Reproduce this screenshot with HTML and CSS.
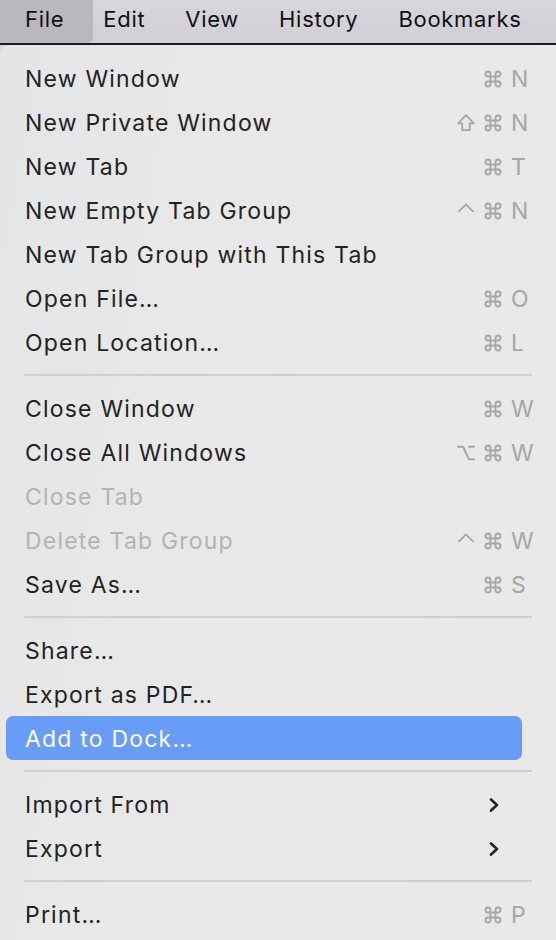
FILE: index.html
```html
<!DOCTYPE html>
<html>
<head>
<meta charset="utf-8">
<link rel="stylesheet" href="styles.css">
</head>
<body>
<div class="menubar">
  <div class="mb-item active">File</div>
  <div class="mb-item">Edit</div>
  <div class="mb-item">View</div>
  <div class="mb-item">History</div>
  <div class="mb-item">Bookmarks</div>
</div>
<div class="menu">
  <div class="item"><span class="label">New Window</span><span class="mods"><svg class="g" viewBox="0 0 24 24"><path d="M15 6v12a3 3 0 1 0 3-3H6a3 3 0 1 0 3 3V6a3 3 0 1 0-3 3h12a3 3 0 1 0-3-3"/></svg></span><span class="key">N</span></div>
  <div class="item"><span class="label">New Private Window</span><span class="mods"><svg class="g" viewBox="0 0 24 24"><path d="M12 2.5L2.5 12.5H7.5V20.5h9V12.5h5Z"/></svg><svg class="g" viewBox="0 0 24 24"><path d="M15 6v12a3 3 0 1 0 3-3H6a3 3 0 1 0 3 3V6a3 3 0 1 0-3 3h12a3 3 0 1 0-3-3"/></svg></span><span class="key">N</span></div>
  <div class="item"><span class="label">New Tab</span><span class="mods"><svg class="g" viewBox="0 0 24 24"><path d="M15 6v12a3 3 0 1 0 3-3H6a3 3 0 1 0 3 3V6a3 3 0 1 0-3 3h12a3 3 0 1 0-3-3"/></svg></span><span class="key">T</span></div>
  <div class="item"><span class="label">New Empty Tab Group</span><span class="mods"><svg class="g" viewBox="0 0 24 24"><path d="M3 13L12 4 21 13"/></svg><svg class="g" viewBox="0 0 24 24"><path d="M15 6v12a3 3 0 1 0 3-3H6a3 3 0 1 0 3 3V6a3 3 0 1 0-3 3h12a3 3 0 1 0-3-3"/></svg></span><span class="key">N</span></div>
  <div class="item"><span class="label">New Tab Group with This Tab</span></div>
  <div class="item"><span class="label">Open File…</span><span class="mods"><svg class="g" viewBox="0 0 24 24"><path d="M15 6v12a3 3 0 1 0 3-3H6a3 3 0 1 0 3 3V6a3 3 0 1 0-3 3h12a3 3 0 1 0-3-3"/></svg></span><span class="key">O</span></div>
  <div class="item"><span class="label">Open Location…</span><span class="mods"><svg class="g" viewBox="0 0 24 24"><path d="M15 6v12a3 3 0 1 0 3-3H6a3 3 0 1 0 3 3V6a3 3 0 1 0-3 3h12a3 3 0 1 0-3-3"/></svg></span><span class="key">L</span></div>
  <div class="sep"></div>
  <div class="item"><span class="label">Close Window</span><span class="mods"><svg class="g" viewBox="0 0 24 24"><path d="M15 6v12a3 3 0 1 0 3-3H6a3 3 0 1 0 3 3V6a3 3 0 1 0-3 3h12a3 3 0 1 0-3-3"/></svg></span><span class="key">W</span></div>
  <div class="item"><span class="label">Close All Windows</span><span class="mods"><svg class="g" viewBox="0 0 24 24"><path d="M1.5 4.5h7l7 15h7M14.5 4.5h8"/></svg><svg class="g" viewBox="0 0 24 24"><path d="M15 6v12a3 3 0 1 0 3-3H6a3 3 0 1 0 3 3V6a3 3 0 1 0-3 3h12a3 3 0 1 0-3-3"/></svg></span><span class="key">W</span></div>
  <div class="item disabled"><span class="label">Close Tab</span></div>
  <div class="item disabled"><span class="label">Delete Tab Group</span><span class="mods"><svg class="g" viewBox="0 0 24 24"><path d="M3 13L12 4 21 13"/></svg><svg class="g" viewBox="0 0 24 24"><path d="M15 6v12a3 3 0 1 0 3-3H6a3 3 0 1 0 3 3V6a3 3 0 1 0-3 3h12a3 3 0 1 0-3-3"/></svg></span><span class="key">W</span></div>
  <div class="item"><span class="label">Save As…</span><span class="mods"><svg class="g" viewBox="0 0 24 24"><path d="M15 6v12a3 3 0 1 0 3-3H6a3 3 0 1 0 3 3V6a3 3 0 1 0-3 3h12a3 3 0 1 0-3-3"/></svg></span><span class="key">S</span></div>
  <div class="sep"></div>
  <div class="item"><span class="label">Share…</span></div>
  <div class="item"><span class="label">Export as PDF…</span></div>
  <div class="item selected"><span class="label">Add to Dock…</span></div>
  <div class="sep"></div>
  <div class="item"><span class="label">Import From</span><svg class="chev" viewBox="0 0 12 16"><path d="M3 2.5L9 8l-6 5.5"/></svg></div>
  <div class="item"><span class="label">Export</span><svg class="chev" viewBox="0 0 12 16"><path d="M3 2.5L9 8l-6 5.5"/></svg></div>
  <div class="sep"></div>
  <div class="item"><span class="label">Print…</span><span class="mods"><svg class="g" viewBox="0 0 24 24"><path d="M15 6v12a3 3 0 1 0 3-3H6a3 3 0 1 0 3 3V6a3 3 0 1 0-3 3h12a3 3 0 1 0-3-3"/></svg></span><span class="key">P</span></div>
</div>
</body>
</html>
```

FILE: styles.css
```css
html, body {
  margin: 0;
  padding: 0;
}
body {
  width: 556px;
  height: 940px;
  overflow: hidden;
  background: #d3d2d7;
  font-family: Inter, "Liberation Sans", sans-serif;
  -webkit-font-smoothing: antialiased;
}
.menubar {
  display: flex;
  height: 43px;
  background: linear-gradient(#d7d6db, #d0cfd4);
  border-bottom: 2px solid #1c1c1e;
  box-sizing: content-box;
}
.mb-item {
  height: 43px;
  box-sizing: border-box;
  display: flex;
  align-items: center;
  padding: 0 20px 5px 20px;
  font-size: 22px;
  letter-spacing: 0.7px;
  color: #111;
  white-space: nowrap;
}
.mb-item.active {
  background: #b9b8bd;
  border-bottom-right-radius: 6px;
  padding-left: 25px;
  padding-right: 29px;
  margin-right: -10px;
}
.menu {
  background: linear-gradient(100deg, #e4e5e7 0%, #e8e8e8 30%, #e9e9e9 100%);
  border-top-left-radius: 8px;
  padding-top: 11px;
  height: 900px;
  box-sizing: border-box;
}
.item {
  display: flex;
  align-items: center;
  height: 44px;
  box-sizing: border-box;
  padding-top: 2px;
  margin: 0 34px 0 6px;
  padding-left: 19px;
  border-radius: 7px;
  font-size: 23px;
  letter-spacing: 1.2px;
  color: #232323;
  white-space: nowrap;
}
.item.disabled {
  color: #b3b3b3;
}
.item.selected {
  background: #679cf7;
  color: #fff;
}
.label {
  flex: 1;
}
.mods {
  display: flex;
  gap: 7px;
  margin-right: 8px;
  align-items: center;
}
.g {
  width: 20px;
  height: 20px;
  fill: none;
  stroke: #a6a6a6;
  stroke-width: 2.2;
  stroke-linejoin: round;
}
.key {
  width: 11px;
  overflow: visible;
  color: #a6a6a6;
  font-size: 23px;
  letter-spacing: 0;
}
.chev {
  width: 12px;
  height: 16px;
  margin-right: 22px;
  fill: none;
  stroke: #232323;
  stroke-width: 2.6;
  stroke-linecap: round;
  stroke-linejoin: round;
}
.sep {
  height: 2px;
  margin: 10px 24px 10px 24px;
  background: #cfcfcf;
}
```
